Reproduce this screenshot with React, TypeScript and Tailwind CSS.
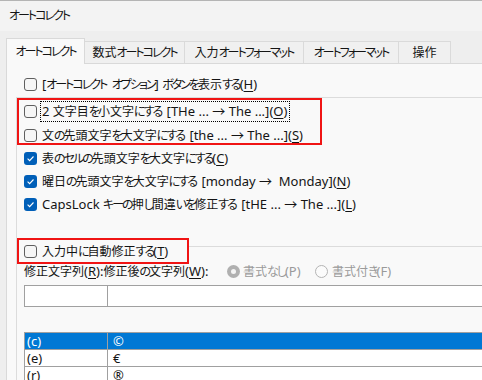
import React from "react";

const KANA = /[\u3040-\u30ff]/;
const CJK = /[\u3000-\u303f\u4e00-\u9fff\uff00-\uffef]/;

function kind(ch: string) {
  if (KANA.test(ch)) return "k";
  if (CJK.test(ch)) return "c";
  return "l";
}

function T({ s }: { s: string }) {
  const runs: { k: string; t: string }[] = [];
  for (const ch of Array.from(s)) {
    const k = kind(ch);
    const last = runs[runs.length - 1];
    if (last && last.k === k) last.t += ch;
    else runs.push({ k, t: ch });
  }
  return (
    <>
      {runs.map((r, i) => {
        if (r.k === "k")
          return (
            <span key={i} className="tracking-[-2px]">
              {r.t}
            </span>
          );
        if (r.k === "c") return <span key={i}>{r.t}</span>;
        const lead = r.t.startsWith(" ") && i > 0 && runs[i - 1].k === "k";
        return (
          <span key={i} className={lead ? "text-[13px] ml-[2px]" : "text-[13px]"}>
            {r.t}
          </span>
        );
      })}
    </>
  );
}

function Box({ checked }: { checked?: boolean }) {
  return checked ? (
    <span className="w-[13px] h-[13px] rounded-[3px] bg-[#005fb8] flex items-center justify-center shrink-0">
      <svg width="9" height="9" viewBox="0 0 9 9">
        <path d="M1.6 4.7 L3.6 6.6 L7.5 2.5" stroke="white" strokeWidth="1.1" fill="none" />
      </svg>
    </span>
  ) : (
    <span className="w-[13px] h-[13px] rounded-[3px] border border-[#5f5f5f] bg-[#f6f6f6] shrink-0" />
  );
}

function U({ c }: { c: string }) {
  return <span className="text-[13px] underline underline-offset-[2px] decoration-[1px]">{c}</span>;
}

function Row({
  checked,
  h,
  children,
}: {
  checked?: boolean;
  h: "a" | "b";
  children: React.ReactNode;
}) {
  return (
    <div className={`flex items-center pl-[7px] gap-[5px] ${h === "a" ? "h-[24px]" : "h-[23px]"}`}>
      <Box checked={checked} />
      <span className="whitespace-nowrap leading-[14px]">{children}</span>
    </div>
  );
}

const tabs = [
  { t: "数式オートコレクト", w: "w-[100px]" },
  { t: "入力オートフォーマット", w: "w-[119px]" },
  { t: "オートフォーマット", w: "w-[95px]" },
  { t: "操作", w: "w-[52px]" },
];

export default function App() {
  return (
    <div className="w-[482px] h-[380px] overflow-hidden bg-[#eeeeee] text-[12px] leading-[16px] text-[#141414] flex flex-col font-['Noto_Sans','Noto_Sans_CJK_JP',sans-serif] [font-feature-settings:'palt']">
      <div className="h-[31px] shrink-0 bg-[#f3f3f3] border-t border-[#b4b4b4] flex items-center pl-[9px]">
        <T s="オートコレクト" />
      </div>
      <div className="flex-1 pl-[6px] pt-[7px] flex flex-col">
        <div className="flex items-end">
          <div className="w-[79px] h-[26px] -mb-px relative z-10 border-l border-t border-r border-[#d9d9d9] bg-[#f9f9f9] flex items-center justify-center">
            <T s="オートコレクト" />
          </div>
          {tabs.map((t) => (
            <div
              key={t.t}
              className={`${t.w} h-[22px] border-t border-r border-[#dadada] bg-[#f0f0f0] flex items-center justify-center whitespace-nowrap`}
            >
              <T s={t.t} />
            </div>
          ))}
        </div>
        <div className="w-[640px] flex-1 bg-[#f9f9f9] border-l border-t border-[#d9d9d9] flex flex-col">
          <div className="mt-[8px] h-[24px] pl-[17px] flex items-center gap-[5px]">
            <Box />
            <span className="whitespace-nowrap leading-[14px]">
              <T s="[オートコレクト オプション] ボタンを表示する(" />
              <U c="H" />
              <T s=")" />
            </span>
          </div>
          <div className="ml-[9px] mt-px flex-1 border-l border-t border-[#dcdcdc] flex flex-col">
            <div className="relative mt-px">
              <div className="absolute left-0 top-[-1px] w-[305px] h-[47px] border-2 border-[#f01414] pointer-events-none" />
              <div className="h-[24px] flex items-center pl-[7px] gap-[3px]">
                <Box />
                <span className="whitespace-nowrap leading-[14px] border border-dotted border-black pl-[1px] pr-[2px] py-[2px]">
                  <T s="2 文字目を小文字にする [THe ... → The ...](" />
                  <U c="O" />
                  <T s=")" />
                </span>
              </div>
              <Row h="a">
                <T s="文の先頭文字を大文字にする [the ... → The ...](" />
                <U c="S" />
                <T s=")" />
              </Row>
            </div>
            <Row h="b" checked>
              <T s="表のセルの先頭文字を大文字にする(" />
              <U c="C" />
              <T s=")" />
            </Row>
            <Row h="b" checked>
              <T s={"曜日の先頭文字を大文字にする [monday →\u00a0 Monday]("} />
              <U c="N" />
              <T s=")" />
            </Row>
            <Row h="b" checked>
              <T s="CapsLock キーの押し間違いを修正する [tHE ... → The ...](" />
              <U c="L" />
              <T s=")" />
            </Row>

            <div className="mt-[22px] flex h-[26px]">
              <div className="w-[172px] border-2 border-[#f01414] flex items-center pl-[5px] gap-[5px]">
                <Box />
                <span className="whitespace-nowrap leading-[14px]">
                  <T s="入力中に自動修正する(" />
                  <U c="T" />
                  <T s=")" />
                </span>
              </div>
              <div className="flex-1 h-[9px] border-b border-[#dcdcdc]" />
            </div>

            <div className="h-[14px] flex items-center pl-[7px]">
              <span className="w-[203px] whitespace-nowrap leading-[14px]">
                <T s="修正文字列(" />
                <U c="R" />
                <T s="):修正後の文字列(" />
                <U c="W" />
                <T s="):" />
              </span>
              <span className="w-[13px] h-[13px] rounded-full bg-[#b0b0b0] flex items-center justify-center shrink-0">
                <span className="w-[5px] h-[5px] rounded-full bg-[#f4f4f4]" />
              </span>
              <span className="ml-[3px] w-[72px] text-[#9a9a9a] whitespace-nowrap leading-[14px]">
                <T s="書式なし(P)" />
              </span>
              <span className="w-[13px] h-[13px] rounded-full border border-[#b4b4b4] bg-[#fbfbfb] shrink-0" />
              <span className="ml-[4px] text-[#9a9a9a] whitespace-nowrap leading-[14px]">
                <T s="書式付き(F)" />
              </span>
            </div>

            <div className="mt-[7px] flex pl-[7px]">
              <div className="w-[84px] h-[22px] border border-[#a0a0a0] bg-white" />
              <div className="-ml-px w-[500px] h-[22px] border border-[#a0a0a0] bg-white" />
            </div>

            <div className="mt-[25px] ml-[7px] border-t border-l border-[#a0a0a0] flex flex-col">
              {[
                ["(c)", "©", true],
                ["(e)", "€", false],
                ["(r)", "®", false],
              ].map(([a, b, sel]) => (
                <div
                  key={a as string}
                  className={`flex h-[17px] border-b border-[#a0a0a0] ${sel ? "bg-[#0078d4] text-white" : "bg-white"}`}
                >
                  <div className="w-[83px] border-r border-[#a0a0a0] pl-[2px] flex items-center text-[13px] leading-[14px]">
                    {a}
                  </div>
                  <div className="flex-1 pl-[5px] flex items-center text-[13px] leading-[14px]">{b}</div>
                </div>
              ))}
            </div>
          </div>
        </div>
      </div>
    </div>
  );
}
